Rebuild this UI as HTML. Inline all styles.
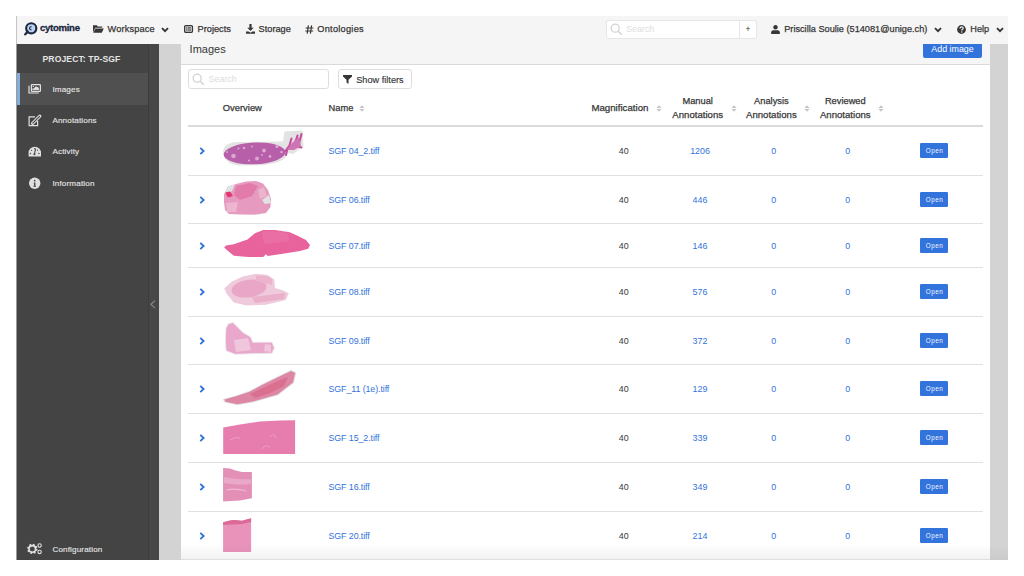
<!DOCTYPE html>
<html><head><meta charset="utf-8">
<style>
*{box-sizing:border-box;margin:0;padding:0}
html,body{width:1024px;height:576px;overflow:hidden;background:#fff;font-family:"Liberation Sans",sans-serif}
.a{position:absolute;white-space:nowrap;line-height:1}
#frame{position:absolute;left:16px;top:16px;width:992px;height:544px;overflow:hidden;background:#fff}
#nav{position:absolute;left:0;top:0;width:992px;height:28px;background:#f5f5f5;z-index:5}
.st{-webkit-text-stroke:0.25px currentColor}
.open{position:absolute;width:28px;height:15px;background:#3273dc;border-radius:1.2px;z-index:2}
</style></head><body>
<div id="frame">
<div id="nav">
<svg class="a" style="left:8px;top:5px" width="16" height="16" viewBox="0 0 16 16"><circle cx="7.25" cy="7.3" r="5.1" fill="#bcd3f2" stroke="#1b2740" stroke-width="2.1"/><path d="M3.7 10.8 L1.3 13.3" stroke="#1b2740" stroke-width="2.3" stroke-linecap="round"/><path d="M7.6 5.9 A1.5 1.5 0 1 0 7.6 8.7" fill="none" stroke="#1b2740" stroke-width="1.1"/></svg>
<span class="a" style="left:24.00px;top:7px;font-size:9.6px;color:#1b2740;font-weight:bold;letter-spacing:-0.3px;-webkit-text-stroke:0.3px #1b2740">cytomine</span>
<svg class="a" style="left:77.30px;top:9.20px" width="11" height="8" viewBox="0 0 11 8"><path d="M0 0.3h3.8l1 1.1h4.4v1.4H2.2L0 7.5z" fill="#363636"/><path d="M2.4 3.4H10.8L8.8 7.8H0.3z" fill="#363636"/></svg>
<span class="a" style="left:91.50px;top:9px;font-size:9.2px;color:#363636;-webkit-text-stroke:0.25px #363636;letter-spacing:0.18px">Workspace</span>
<svg class="a" style="left:145.00px;top:10.50px" width="8" height="6" viewBox="0 0 8 6"><path d="M1 1.2 L4 4.2 L7 1.2" fill="none" stroke="#363636" stroke-width="1.9"/></svg>
<svg class="a" style="left:168.00px;top:8.80px" width="10" height="8" viewBox="0 0 10 8"><rect x="0.7" y="0.7" width="7.7" height="6.5" rx="1" fill="none" stroke="#363636" stroke-width="1.4"/><rect x="1.4" y="1.4" width="6.3" height="5.1" fill="#bdbdbd"/><path d="M2.6 2.4v1M2.6 4.5v1M3.8 2.9h3M3.8 5h3" stroke="#363636" stroke-width="0.9"/></svg>
<span class="a" style="left:181.60px;top:9px;font-size:9.2px;color:#363636;-webkit-text-stroke:0.25px #363636">Projects</span>
<svg class="a" style="left:229.60px;top:8.00px" width="9" height="10" viewBox="0 0 9 10"><path d="M3.4 0h2.2v3.8h2.1L4.5 7.1 1.3 3.8h2.1z" fill="#363636"/><path d="M0 7.4h2.6l1.9 1.4 1.9-1.4H9V9.8H0z" fill="#363636"/></svg>
<span class="a" style="left:242.60px;top:9px;font-size:9.2px;color:#363636;-webkit-text-stroke:0.25px #363636">Storage</span>
<svg class="a" style="left:289.00px;top:8.50px" width="9" height="9" viewBox="0 0 9 9"><path d="M3.4 0.4 L2.2 8.6 M6.6 0.4 L5.4 8.6 M0.6 3 H8.4 M0.4 6 H8.2" stroke="#363636" stroke-width="1.2"/></svg>
<span class="a" style="left:301.30px;top:9px;font-size:9.2px;color:#363636;-webkit-text-stroke:0.25px #363636;letter-spacing:0.27px">Ontologies</span>
<div class="a" style="left:589.90px;top:3.50px;width:151.5px;height:19px;background:#fff;border:1px solid #e6e6e6;border-radius:2px"></div>
<div class="a" style="left:722.70px;top:3.50px;width:1px;height:19px;background:#e6e6e6"></div>
<svg class="a" style="left:593.50px;top:6.50px" width="13" height="13" viewBox="0 0 13 13"><circle cx="5.2" cy="5.2" r="4" fill="none" stroke="#d2d2d2" stroke-width="1.3"/><path d="M8.2 8.2L11.8 11.8" stroke="#d2d2d2" stroke-width="1.6"/></svg>
<span class="a" style="left:610.20px;top:9px;font-size:8.9px;color:#dedede;">Search</span>
<span class="a" style="left:729.50px;top:9px;font-size:8.5px;color:#363636;">+</span>
<svg class="a" style="left:755.00px;top:8.80px" width="9" height="9" viewBox="0 0 9 9"><circle cx="4.5" cy="2.3" r="2.2" fill="#363636"/><path d="M0.2 9 V7.3 Q0.2 5.2 2.3 5.2 H6.7 Q8.8 5.2 8.8 7.3 V9z" fill="#363636"/></svg>
<span class="a" style="left:768.20px;top:9px;font-size:9.2px;color:#363636;-webkit-text-stroke:0.25px #363636">Priscilla Soulie (514081@unige.ch)</span>
<svg class="a" style="left:918.00px;top:10.50px" width="8" height="6" viewBox="0 0 8 6"><path d="M1 1.2 L4 4.2 L7 1.2" fill="none" stroke="#363636" stroke-width="1.9"/></svg>
<svg class="a" style="left:941.20px;top:8.60px" width="9" height="9" viewBox="0 0 9 9"><circle cx="4.5" cy="4.5" r="4.4" fill="#363636"/><path d="M3 3.4 Q3 1.8 4.6 1.8 Q6.2 1.8 6.2 3.3 Q6.2 4.2 5.2 4.6 Q4.8 4.8 4.8 5.5" fill="none" stroke="#f5f5f5" stroke-width="1.2"/><circle cx="4.75" cy="7" r="0.7" fill="#f5f5f5"/></svg>
<span class="a" style="left:954.30px;top:9px;font-size:9.2px;color:#363636;-webkit-text-stroke:0.25px #363636">Help</span>
<svg class="a" style="left:980.00px;top:10.50px" width="8" height="6" viewBox="0 0 8 6"><path d="M1 1.2 L4 4.2 L7 1.2" fill="none" stroke="#363636" stroke-width="1.9"/></svg>
</div>
<div class="a" style="left:0;top:28px;width:131.5px;height:516px;background:#444"></div>
<div class="a" style="left:131.5px;top:28px;width:11.5px;height:516px;background:#474747;border-left:1px solid #3c3c3c"></div>
<div class="a" style="left:143px;top:28px;width:22px;height:516px;background:#d3d3d3"></div>
<div class="a" style="left:974px;top:28px;width:18px;height:516px;background:#d3d3d3"></div>
<div class="a" style="left:0;top:28px;width:1px;height:516px;background:#9a9a9a;z-index:2"></div>
<div class="a" style="left:0;top:0;width:1px;height:28px;background:#c4c4c4;z-index:6"></div>
<span class="a" style="left:26.50px;top:39px;font-size:8.6px;color:#e4e4e4;font-weight:bold;letter-spacing:0.1px">PROJECT: TP-SGF</span>
<div class="a" style="left:1px;top:57.10px;width:130.5px;height:31.8px;background:#505050"></div>
<div class="a" style="left:1px;top:57.10px;width:3.2px;height:31.8px;background:#84aedd"></div>
<span class="a" style="left:36.40px;top:70px;font-size:8.1px;color:#e2e2e2;letter-spacing:0.15px;-webkit-text-stroke:0.15px #e2e2e2">Images</span>
<span class="a" style="left:36.40px;top:101px;font-size:8.1px;color:#e2e2e2;letter-spacing:0.15px;-webkit-text-stroke:0.15px #e2e2e2">Annotations</span>
<span class="a" style="left:36.40px;top:132px;font-size:8.1px;color:#e2e2e2;letter-spacing:0.15px;-webkit-text-stroke:0.15px #e2e2e2">Activity</span>
<span class="a" style="left:36.40px;top:164px;font-size:8.1px;color:#e2e2e2;letter-spacing:0.15px;-webkit-text-stroke:0.15px #e2e2e2">Information</span>
<span class="a" style="left:36.40px;top:530px;font-size:8.1px;color:#e2e2e2;letter-spacing:0.15px;-webkit-text-stroke:0.15px #e2e2e2">Configuration</span>
<svg class="a" style="left:11.00px;top:67.00px" width="15" height="12" viewBox="27 83 15 12"><rect x="31.4" y="84.7" width="9" height="6.7" rx="0.6" fill="none" stroke="#e0e0e0" stroke-width="1.2"/><path d="M32.5 90 V88 L33.5 88.8 L35.6 86.4 Q37.5 86.2 38.9 88 V90Z" fill="#e0e0e0"/><circle cx="33.3" cy="86.4" r="0.65" fill="#e0e0e0"/><path d="M29 85.8 V93 H38.8" fill="none" stroke="#e0e0e0" stroke-width="1.2"/></svg>
<svg class="a" style="left:11.00px;top:97.50px" width="15" height="14" viewBox="27 113.5 15 14"><path d="M35 116.4 H29.1 V125.2 H37.6 V120.5" fill="none" stroke="#e0e0e0" stroke-width="1.2"/><path d="M32.6 122.8 L39.8 115.6" stroke="#e0e0e0" stroke-width="3.1" stroke-linecap="round"/><path d="M32.8 122.6 L39.6 115.8" stroke="#444" stroke-width="1.1" stroke-linecap="round"/></svg>
<svg class="a" style="left:11.00px;top:129.00px" width="16" height="13" viewBox="27 145 16 13"><path d="M28.6 156.5 V153 A6.2 6.2 0 0 1 41 153 V156.5 Z" fill="#e0e0e0"/><path d="M34.4 154.5 L35.6 148.6" stroke="#444" stroke-width="1.1"/><circle cx="34.4" cy="154.3" r="1.05" fill="#444"/><circle cx="30.5" cy="153.5" r="0.7" fill="#444"/><circle cx="31.6" cy="150.3" r="0.65" fill="#444"/><circle cx="38.9" cy="153.5" r="0.7" fill="#444"/><circle cx="37.6" cy="150.2" r="0.6" fill="#444"/><circle cx="34.6" cy="148.6" r="0.6" fill="#444"/></svg>
<svg class="a" style="left:12.00px;top:160.50px" width="14" height="13" viewBox="28 176.5 14 13"><circle cx="34.7" cy="182.8" r="5.7" fill="#e0e0e0"/><circle cx="34.7" cy="180.1" r="0.9" fill="#444"/><path d="M33.7 182 H35.4 V185.3 H36 V186.2 H33.5 V185.3 H34.1 V182.9 H33.7Z" fill="#444"/></svg>
<svg class="a" style="left:10.00px;top:526.00px" width="17" height="13" viewBox="26 542 17 13"><circle cx="32.3" cy="548.9" r="3.9" fill="none" stroke="#e0e0e0" stroke-width="2.6" stroke-dasharray="1.6 1.46"/><circle cx="32.3" cy="548.9" r="3.3" fill="none" stroke="#e0e0e0" stroke-width="1.6"/><circle cx="39.6" cy="545.5" r="1.7" fill="none" stroke="#e0e0e0" stroke-width="1.1"/><circle cx="39.6" cy="551.9" r="1.7" fill="none" stroke="#e0e0e0" stroke-width="1.1"/></svg>
<svg class="a" style="left:134.00px;top:283.50px" width="6" height="9" viewBox="0 0 6 9"><path d="M5 0.6 L1 4.3 L5 8.2" fill="none" stroke="#8c8c8c" stroke-width="1.1"/></svg>
<div class="a" style="left:165px;top:28px;width:809px;height:21px;background:#f5f5f5;border-bottom:1px solid #dadada"></div>
<span class="a" style="left:173.60px;top:28px;font-size:11px;color:#363636;">Images</span>
<div class="a" style="left:907.20px;top:24px;width:58.7px;height:18.3px;background:#3273dc;border-radius:2px;z-index:3"></div>
<span class="a" style="left:915.30px;top:29px;font-size:8.9px;color:#fff;z-index:3">Add image</span>
<div class="a" style="left:172.40px;top:53.40px;width:141px;height:20px;border:1px solid #dedede;border-radius:3px;background:#fff"></div>
<svg class="a" style="left:175.50px;top:56.50px" width="13" height="13" viewBox="0 0 13 13"><circle cx="5.2" cy="5.2" r="4" fill="none" stroke="#d2d2d2" stroke-width="1.3"/><path d="M8.2 8.2L11.8 11.8" stroke="#d2d2d2" stroke-width="1.6"/></svg>
<span class="a" style="left:192.60px;top:59px;font-size:8.9px;color:#dcdcdc;">Search</span>
<div class="a" style="left:321.50px;top:53.40px;width:74px;height:20px;border:1px solid #dedede;border-radius:3px;background:#fff"></div>
<svg class="a" style="left:327.20px;top:58.50px" width="9" height="9" viewBox="0 0 9 9"><path d="M0 0H9V1.4L5.5 4.8V9L3.5 7.6V4.8L0 1.4z" fill="#363636"/></svg>
<span class="a" style="left:340.20px;top:60px;font-size:9.2px;color:#363636;-webkit-text-stroke:0.15px #363636">Show filters</span>
<span class="a" style="left:206.80px;top:87px;font-size:9.4px;color:#363636;-webkit-text-stroke:0.25px #363636">Overview</span>
<span class="a" style="left:312.60px;top:88px;font-size:9.3px;color:#363636;-webkit-text-stroke:0.25px #363636">Name</span>
<svg class="a" style="left:343.00px;top:89.00px" width="6" height="7" viewBox="0 0 6 7"><path d="M3 0.2L5.6 2.9H0.4zM3 6.8L0.4 4.1H5.6z" fill="#c6c6c6"/></svg>
<span class="a" style="left:575.40px;top:87px;font-size:9.7px;color:#363636;-webkit-text-stroke:0.25px #363636">Magnification</span>
<svg class="a" style="left:639.50px;top:89.00px" width="6" height="7" viewBox="0 0 6 7"><path d="M3 0.2L5.6 2.9H0.4zM3 6.8L0.4 4.1H5.6z" fill="#c6c6c6"/></svg>
<span class="a" style="left:581.70px;width:200px;text-align:center;top:81px;font-size:9.3px;color:#363636;-webkit-text-stroke:0.25px #363636">Manual</span>
<span class="a" style="left:581.70px;width:200px;text-align:center;top:94px;font-size:9.6px;color:#363636;-webkit-text-stroke:0.25px #363636">Annotations</span>
<svg class="a" style="left:714.50px;top:89.00px" width="6" height="7" viewBox="0 0 6 7"><path d="M3 0.2L5.6 2.9H0.4zM3 6.8L0.4 4.1H5.6z" fill="#c6c6c6"/></svg>
<span class="a" style="left:655.40px;width:200px;text-align:center;top:81px;font-size:9.3px;color:#363636;-webkit-text-stroke:0.25px #363636">Analysis</span>
<span class="a" style="left:655.40px;width:200px;text-align:center;top:94px;font-size:9.6px;color:#363636;-webkit-text-stroke:0.25px #363636">Annotations</span>
<svg class="a" style="left:788.00px;top:89.00px" width="6" height="7" viewBox="0 0 6 7"><path d="M3 0.2L5.6 2.9H0.4zM3 6.8L0.4 4.1H5.6z" fill="#c6c6c6"/></svg>
<span class="a" style="left:729.30px;width:200px;text-align:center;top:81px;font-size:9.3px;color:#363636;-webkit-text-stroke:0.25px #363636">Reviewed</span>
<span class="a" style="left:729.30px;width:200px;text-align:center;top:94px;font-size:9.6px;color:#363636;-webkit-text-stroke:0.25px #363636">Annotations</span>
<svg class="a" style="left:862.00px;top:89.00px" width="6" height="7" viewBox="0 0 6 7"><path d="M3 0.2L5.6 2.9H0.4zM3 6.8L0.4 4.1H5.6z" fill="#c6c6c6"/></svg>
<div class="a" style="left:171.50px;top:108.90px;width:795.5px;height:1.7px;background:#dadada"></div>
<div class="a" style="left:171.50px;top:158.80px;width:795.5px;height:1px;background:#e0e0e0"></div>
<svg class="a" style="left:182.60px;top:130.95px" width="7" height="8" viewBox="0 0 7 8"><path d="M1.3 0.9L4.6 4L1.3 7.1" fill="none" stroke="#3273dc" stroke-width="1.9"/></svg>
<span class="a" style="left:312.50px;top:131px;font-size:8.9px;color:#3273dc;letter-spacing:-0.1px">SGF 04_2.tiff</span>
<span class="a" style="left:507.75px;width:200px;text-align:center;top:131px;font-size:8.9px;color:#3a3a3a;">40</span>
<span class="a" style="left:584.00px;width:200px;text-align:center;top:131px;font-size:8.9px;color:#3273dc;">1206</span>
<span class="a" style="left:657.75px;width:200px;text-align:center;top:131px;font-size:8.9px;color:#3273dc;">0</span>
<span class="a" style="left:731.80px;width:200px;text-align:center;top:131px;font-size:8.9px;color:#3273dc;">0</span>
<div class="open" style="left:903.70px;top:126.95px"></div>
<span class="a" style="left:909.80px;top:132px;font-size:6.3px;color:#f4f7ff;letter-spacing:0.55px;z-index:3">Open</span>
<div class="a" style="left:171.50px;top:207.10px;width:795.5px;height:1px;background:#e0e0e0"></div>
<svg class="a" style="left:182.60px;top:179.95px" width="7" height="8" viewBox="0 0 7 8"><path d="M1.3 0.9L4.6 4L1.3 7.1" fill="none" stroke="#3273dc" stroke-width="1.9"/></svg>
<span class="a" style="left:312.50px;top:180px;font-size:8.9px;color:#3273dc;letter-spacing:-0.1px">SGF 06.tiff</span>
<span class="a" style="left:507.75px;width:200px;text-align:center;top:180px;font-size:8.9px;color:#3a3a3a;">40</span>
<span class="a" style="left:584.00px;width:200px;text-align:center;top:180px;font-size:8.9px;color:#3273dc;">446</span>
<span class="a" style="left:657.75px;width:200px;text-align:center;top:180px;font-size:8.9px;color:#3273dc;">0</span>
<span class="a" style="left:731.80px;width:200px;text-align:center;top:180px;font-size:8.9px;color:#3273dc;">0</span>
<div class="open" style="left:903.70px;top:175.95px"></div>
<span class="a" style="left:909.80px;top:181px;font-size:6.3px;color:#f4f7ff;letter-spacing:0.55px;z-index:3">Open</span>
<div class="a" style="left:171.50px;top:250.50px;width:795.5px;height:1px;background:#e0e0e0"></div>
<svg class="a" style="left:182.60px;top:225.80px" width="7" height="8" viewBox="0 0 7 8"><path d="M1.3 0.9L4.6 4L1.3 7.1" fill="none" stroke="#3273dc" stroke-width="1.9"/></svg>
<span class="a" style="left:312.50px;top:226px;font-size:8.9px;color:#3273dc;letter-spacing:-0.1px">SGF 07.tiff</span>
<span class="a" style="left:507.75px;width:200px;text-align:center;top:226px;font-size:8.9px;color:#3a3a3a;">40</span>
<span class="a" style="left:584.00px;width:200px;text-align:center;top:226px;font-size:8.9px;color:#3273dc;">146</span>
<span class="a" style="left:657.75px;width:200px;text-align:center;top:226px;font-size:8.9px;color:#3273dc;">0</span>
<span class="a" style="left:731.80px;width:200px;text-align:center;top:226px;font-size:8.9px;color:#3273dc;">0</span>
<div class="open" style="left:903.70px;top:221.80px"></div>
<span class="a" style="left:909.80px;top:227px;font-size:6.3px;color:#f4f7ff;letter-spacing:0.55px;z-index:3">Open</span>
<div class="a" style="left:171.50px;top:300.00px;width:795.5px;height:1px;background:#e0e0e0"></div>
<svg class="a" style="left:182.60px;top:272.25px" width="7" height="8" viewBox="0 0 7 8"><path d="M1.3 0.9L4.6 4L1.3 7.1" fill="none" stroke="#3273dc" stroke-width="1.9"/></svg>
<span class="a" style="left:312.50px;top:272px;font-size:8.9px;color:#3273dc;letter-spacing:-0.1px">SGF 08.tiff</span>
<span class="a" style="left:507.75px;width:200px;text-align:center;top:272px;font-size:8.9px;color:#3a3a3a;">40</span>
<span class="a" style="left:584.00px;width:200px;text-align:center;top:272px;font-size:8.9px;color:#3273dc;">576</span>
<span class="a" style="left:657.75px;width:200px;text-align:center;top:272px;font-size:8.9px;color:#3273dc;">0</span>
<span class="a" style="left:731.80px;width:200px;text-align:center;top:272px;font-size:8.9px;color:#3273dc;">0</span>
<div class="open" style="left:903.70px;top:268.25px"></div>
<span class="a" style="left:909.80px;top:273px;font-size:6.3px;color:#f4f7ff;letter-spacing:0.55px;z-index:3">Open</span>
<div class="a" style="left:171.50px;top:347.70px;width:795.5px;height:1px;background:#e0e0e0"></div>
<svg class="a" style="left:182.60px;top:320.85px" width="7" height="8" viewBox="0 0 7 8"><path d="M1.3 0.9L4.6 4L1.3 7.1" fill="none" stroke="#3273dc" stroke-width="1.9"/></svg>
<span class="a" style="left:312.50px;top:321px;font-size:8.9px;color:#3273dc;letter-spacing:-0.1px">SGF 09.tiff</span>
<span class="a" style="left:507.75px;width:200px;text-align:center;top:321px;font-size:8.9px;color:#3a3a3a;">40</span>
<span class="a" style="left:584.00px;width:200px;text-align:center;top:321px;font-size:8.9px;color:#3273dc;">372</span>
<span class="a" style="left:657.75px;width:200px;text-align:center;top:321px;font-size:8.9px;color:#3273dc;">0</span>
<span class="a" style="left:731.80px;width:200px;text-align:center;top:321px;font-size:8.9px;color:#3273dc;">0</span>
<div class="open" style="left:903.70px;top:316.85px"></div>
<span class="a" style="left:909.80px;top:322px;font-size:6.3px;color:#f4f7ff;letter-spacing:0.55px;z-index:3">Open</span>
<div class="a" style="left:171.50px;top:396.90px;width:795.5px;height:1px;background:#e0e0e0"></div>
<svg class="a" style="left:182.60px;top:369.30px" width="7" height="8" viewBox="0 0 7 8"><path d="M1.3 0.9L4.6 4L1.3 7.1" fill="none" stroke="#3273dc" stroke-width="1.9"/></svg>
<span class="a" style="left:312.50px;top:369px;font-size:8.9px;color:#3273dc;letter-spacing:-0.1px">SGF_11 (1e).tiff</span>
<span class="a" style="left:507.75px;width:200px;text-align:center;top:369px;font-size:8.9px;color:#3a3a3a;">40</span>
<span class="a" style="left:584.00px;width:200px;text-align:center;top:369px;font-size:8.9px;color:#3273dc;">129</span>
<span class="a" style="left:657.75px;width:200px;text-align:center;top:369px;font-size:8.9px;color:#3273dc;">0</span>
<span class="a" style="left:731.80px;width:200px;text-align:center;top:369px;font-size:8.9px;color:#3273dc;">0</span>
<div class="open" style="left:903.70px;top:365.30px"></div>
<span class="a" style="left:909.80px;top:370px;font-size:6.3px;color:#f4f7ff;letter-spacing:0.55px;z-index:3">Open</span>
<div class="a" style="left:171.50px;top:445.80px;width:795.5px;height:1px;background:#e0e0e0"></div>
<svg class="a" style="left:182.60px;top:418.35px" width="7" height="8" viewBox="0 0 7 8"><path d="M1.3 0.9L4.6 4L1.3 7.1" fill="none" stroke="#3273dc" stroke-width="1.9"/></svg>
<span class="a" style="left:312.50px;top:418px;font-size:8.9px;color:#3273dc;letter-spacing:-0.1px">SGF 15_2.tiff</span>
<span class="a" style="left:507.75px;width:200px;text-align:center;top:418px;font-size:8.9px;color:#3a3a3a;">40</span>
<span class="a" style="left:584.00px;width:200px;text-align:center;top:418px;font-size:8.9px;color:#3273dc;">339</span>
<span class="a" style="left:657.75px;width:200px;text-align:center;top:418px;font-size:8.9px;color:#3273dc;">0</span>
<span class="a" style="left:731.80px;width:200px;text-align:center;top:418px;font-size:8.9px;color:#3273dc;">0</span>
<div class="open" style="left:903.70px;top:414.35px"></div>
<span class="a" style="left:909.80px;top:419px;font-size:6.3px;color:#f4f7ff;letter-spacing:0.55px;z-index:3">Open</span>
<div class="a" style="left:171.50px;top:494.70px;width:795.5px;height:1px;background:#e0e0e0"></div>
<svg class="a" style="left:182.60px;top:467.25px" width="7" height="8" viewBox="0 0 7 8"><path d="M1.3 0.9L4.6 4L1.3 7.1" fill="none" stroke="#3273dc" stroke-width="1.9"/></svg>
<span class="a" style="left:312.50px;top:467px;font-size:8.9px;color:#3273dc;letter-spacing:-0.1px">SGF 16.tiff</span>
<span class="a" style="left:507.75px;width:200px;text-align:center;top:467px;font-size:8.9px;color:#3a3a3a;">40</span>
<span class="a" style="left:584.00px;width:200px;text-align:center;top:467px;font-size:8.9px;color:#3273dc;">349</span>
<span class="a" style="left:657.75px;width:200px;text-align:center;top:467px;font-size:8.9px;color:#3273dc;">0</span>
<span class="a" style="left:731.80px;width:200px;text-align:center;top:467px;font-size:8.9px;color:#3273dc;">0</span>
<div class="open" style="left:903.70px;top:463.25px"></div>
<span class="a" style="left:909.80px;top:468px;font-size:6.3px;color:#f4f7ff;letter-spacing:0.55px;z-index:3">Open</span>
<svg class="a" style="left:182.60px;top:516.10px" width="7" height="8" viewBox="0 0 7 8"><path d="M1.3 0.9L4.6 4L1.3 7.1" fill="none" stroke="#3273dc" stroke-width="1.9"/></svg>
<span class="a" style="left:312.50px;top:516px;font-size:8.9px;color:#3273dc;letter-spacing:-0.1px">SGF 20.tiff</span>
<span class="a" style="left:507.75px;width:200px;text-align:center;top:516px;font-size:8.9px;color:#3a3a3a;">40</span>
<span class="a" style="left:584.00px;width:200px;text-align:center;top:516px;font-size:8.9px;color:#3273dc;">214</span>
<span class="a" style="left:657.75px;width:200px;text-align:center;top:516px;font-size:8.9px;color:#3273dc;">0</span>
<span class="a" style="left:731.80px;width:200px;text-align:center;top:516px;font-size:8.9px;color:#3273dc;">0</span>
<div class="open" style="left:903.70px;top:512.10px"></div>
<span class="a" style="left:909.80px;top:517px;font-size:6.3px;color:#f4f7ff;letter-spacing:0.55px;z-index:3">Open</span>
<svg class="a" style="left:-16px;top:-16px;z-index:1" width="1024" height="576" viewBox="0 0 1024 576">
<defs><filter id="bl" x="-10%" y="-10%" width="120%" height="120%"><feGaussianBlur stdDeviation="0.35"/></filter></defs>
<g filter="url(#bl)">
<path d="M223.3 151 Q224 142 240 142 L283 141.5 L284.5 131.5 L302.5 130.5 L303.5 146.5 L293 154 L287.5 153 Q286 163 262 165.2 L238 165.5 Q223 163 223.3 151Z" fill="#e3e3e3"/>
<ellipse cx="254.6" cy="153.4" rx="30.9" ry="10.9" transform="rotate(-2.5 254.6 153.4)" fill="#b75ea9"/>
<circle cx="233.5" cy="156" r="2.3" fill="#d8a8d2"/>
<circle cx="264" cy="150.5" r="1.9" fill="#d8a8d2"/>
<circle cx="277" cy="146.5" r="1.6" fill="#d8a8d2"/>
<circle cx="257" cy="158.5" r="1.9" fill="#d8a8d2"/>
<circle cx="244" cy="148" r="1.3" fill="#d8a8d2"/>
<circle cx="270" cy="156.5" r="1.4" fill="#d8a8d2"/>
<circle cx="249" cy="160.5" r="1.1" fill="#d8a8d2"/>
<circle cx="238.5" cy="148.5" r="1.1" fill="#d8a8d2"/>
<circle cx="281.5" cy="152" r="1.3" fill="#d8a8d2"/>
<circle cx="252" cy="146.5" r="1" fill="#d8a8d2"/>
<circle cx="227" cy="152" r="1" fill="#d8a8d2"/>
<circle cx="262" cy="155" r="0.9" fill="#d8a8d2"/>
<path d="M285.5 151 L289.5 145.5 L292.5 148.5 L296 140 L299 143.5 L301.5 134 M289.5 145.5 L291.5 138.5 M296 140 L297.5 135.5 M292.5 148.5 L297.5 146.5 L301.5 147.5 M287.5 148 L286 155" stroke="#c4509e" stroke-width="2.1" fill="none" stroke-linecap="round"/>
<path d="M287 150 L292 143 L299 137 L301 146 L294 150Z" fill="#cf74b4"/>
<path d="M224.0 194.0 L228.0 186.5 L236.0 184.0 L246.0 181.5 L256.0 181.0 L263.0 183.5 L268.0 190.0 L271.0 199.0 L270.5 207.0 L266.0 213.0 L255.0 214.8 L240.0 214.5 L229.0 214.0 L225.0 210.0 L224.0 202.0Z" fill="#e69ac0"/>
<path d="M224.5 194.0 L228.0 186.5 L235.0 184.5 L232.0 191.0 L227.0 194.0Z" fill="#dfe3e3"/>
<path d="M262.0 200.0 L269.0 195.0 L271.0 203.0 L265.0 204.0Z" fill="#e2e4e4"/>
<path d="M236.0 186.0 L250.0 183.0 L258.0 186.0 L252.0 196.0 L240.0 200.0 L234.0 195.0Z" fill="#e27aaa"/>
<path d="M225.0 192.5 L230.0 191.5 L233.0 196.0 L228.0 197.5Z" fill="#e0386c"/>
<path d="M226.0 203.0 L238.0 202.0 L236.0 212.0 L227.0 212.0Z" fill="#ecb6cf"/>
<path d="M258.0 190.0 L264.0 187.0 L267.0 196.0 L260.0 199.0Z" fill="#ebb5cd"/>
<path d="M224.1 247.4 L228.0 251.0 L233.8 255.7 L248.0 257.0 L263.2 257.0 L265.9 254.3 L267.8 256.1 L284.3 253.4 L300.0 251.0 L308.2 248.8 L310.0 245.1 L306.0 240.0 L298.0 236.0 L289.8 232.3 L275.1 230.0 L263.2 230.0 L254.9 233.2 L247.5 239.6 L233.8 244.2 L226.0 245.5Z" fill="#e8649c"/>
<path d="M262 231.5 Q276 230 288 233.5 L289 241 Q276 243 264 244Z" fill="#ea6ea3" />
<path d="M224.2 288.6 L231.5 281.8 L242.9 276.4 L255.9 273.7 L267.4 274.9 L274.2 279.5 L275.0 287.9 L282.6 290.2 L288.8 293.2 L285.7 300.1 L265.8 304.7 L246.7 305.4 L233.8 302.4 L226.9 294.0Z" fill="#efc9dc"/>
<ellipse cx="249" cy="288.5" rx="17.5" ry="8.8" transform="rotate(-8 249 288.5)" fill="#eaa6c6"/>
<path d="M256 276 Q266 274 272 279 L272 285 Q264 283 256 281Z" fill="#ecb3cd"/>
<path d="M252 297 L285 293 L284 299 L255 303Z" fill="#eab0ca"/>
<path d="M226.0 328.0 L228.5 323.8 L233.0 322.6 L242.9 332.5 L250.6 337.1 L252.9 342.5 L255.9 342.3 L272.0 342.3 L274.3 347.8 L272.0 353.2 L255.2 353.6 L235.3 354.2 L226.1 350.8 L225.4 341.0Z" fill="#eaa7cc" stroke="#e6e6e6" stroke-width="0.8"/>
<path d="M234 340 L248 338 L251 350 L236 352Z" fill="#f0c6dc"/>
<path d="M265 344 L271 345 L271 352 L264 351Z" fill="#f0c6dc"/>
<path d="M222.6 399.3 L236.0 395.5 L249.5 390.8 L262.0 384.0 L277.3 376.6 L291.2 369.8 L296.3 372.3 L294.0 383.0 L278.0 395.3 L253.0 402.5 L237.3 405.2 L224.6 402.4Z" fill="#dfe3e3"/>
<path d="M224.2 399.5 L236.0 396.3 L249.5 391.8 L262.0 385.0 L277.3 377.6 L291.0 371.0 L295.2 373.0 L293.0 382.4 L277.5 394.5 L253.0 401.5 L237.3 404.2 L225.5 401.8Z" fill="#de86a5"/>
<path d="M250.0 394.0 L265.0 387.0 L280.0 380.0 L288.0 377.0 L284.0 386.0 L270.0 393.0 L255.0 398.0Z" fill="#d9708f"/>
<path d="M223.2 427.5 L240.0 424.5 L260.0 421.5 L280.0 420.5 L295.1 420.3 L295.1 454.0 L223.2 454.0Z" fill="#e77cae"/>
<path d="M230 440 Q236 436 240 438 M270 437 Q274 432 276 438 M262 449 Q265 444 270 447" stroke="#f2c6da" stroke-width="0.7" fill="none" opacity="0.7"/>
<path d="M223.1 468.0 L230.0 468.5 L235.6 470.4 L242.0 472.0 L251.9 472.0 L251.9 498.3 L240.0 500.5 L223.1 501.5Z" fill="#e48fb6"/>
<path d="M224 477 Q238 480 251 479 L251 484 Q238 486 224 483Z" fill="#e9a8c7"/><path d="M226 490 Q236 488 246 491" stroke="#eeb9d2" stroke-width="1.2" fill="none"/>
<path d="M223.1 522.3 L230.0 520.5 L234.0 519.9 L242.0 520.7 L251.1 518.3 L251.1 552.0 L223.1 552.0Z" fill="#e993bb"/>
<path d="M223.1 522.3 L230.0 520.5 L234.0 519.9 L242.0 520.7 L251.1 518.3 L251.1 522.0 L242.0 524.0 L223.1 525.0Z" fill="#dc6a98"/>
</g></svg>
<div class="a" style="left:165px;top:528.00px;width:809px;height:16px;background:linear-gradient(rgba(0,0,0,0),rgba(0,0,0,0.055));z-index:4"></div>
<div class="a" style="left:165px;top:543.00px;width:809px;height:1px;background:rgba(0,0,0,0.08);z-index:4"></div>
<div class="a" style="left:974px;top:528.00px;width:18px;height:16px;background:linear-gradient(rgba(0,0,0,0),rgba(0,0,0,0.04));z-index:4"></div>
</div>
</body></html>
